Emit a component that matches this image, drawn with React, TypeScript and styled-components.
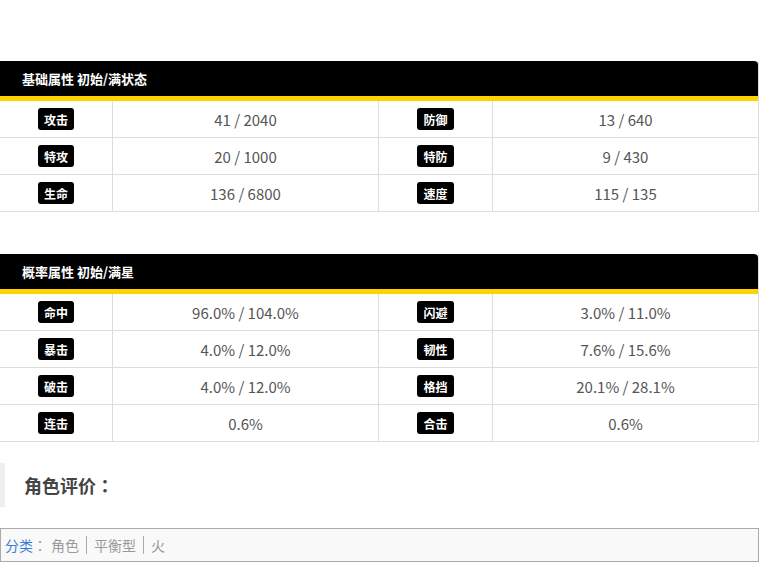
import React from "react";
import styled, { createGlobalStyle } from "styled-components";

const Global = createGlobalStyle`
  html, body { margin: 0; padding: 0; background: #fff; }
  body { font-family: "Noto Sans CJK SC", "Noto Sans", sans-serif; }
`;

const Page = styled.div`
  width: 759px;
  padding-top: 61px;
  display: flex;
  flex-direction: column;
`;

const Table = styled.div<{ $gap: number }>`
  margin-bottom: ${(p) => p.$gap}px;
  border-right: 1px solid #ddd;
`;

const Header = styled.div`
  height: 35px;
  background: #000;
  border-bottom: 5px solid #ffd200;
  border-top-right-radius: 4px;
  display: flex;
  align-items: center;
  padding-left: 22px;
  color: #fff;
  font-size: 13px;
  font-weight: 700;
`;

const Row = styled.div`
  display: grid;
  grid-template-columns: 113px 266px 114px 1fr;
  height: 37px;
  border-bottom: 1px solid #ddd;
  box-sizing: border-box;
`;

const Cell = styled.div<{ $last?: boolean }>`
  display: flex;
  align-items: center;
  justify-content: center;
  border-right: ${(p) => (p.$last ? "none" : "1px solid #ddd")};
  font-size: 15px;
  color: #555;
`;

const Badge = styled.span`
  display: inline-flex;
  align-items: center;
  justify-content: center;
  height: 22px;
  padding: 0 6px;
  background: #000;
  color: #fff;
  border-radius: 3px;
  font-size: 12px;
  font-weight: 700;
`;

const Colon = styled.span`
  font-family: "Noto Sans CJK TC", "Noto Sans CJK SC", sans-serif;
`;

const Heading = styled.div`
  height: 44px;
  border-left: 5px solid #eee;
  display: flex;
  align-items: center;
  padding-left: 19px;
  font-size: 18px;
  font-weight: 700;
  color: #444;
  margin-bottom: 21px;
`;

const Category = styled.div`
  height: 34px;
  box-sizing: border-box;
  border: 1px solid #aaa;
  background: #f9f9f9;
  display: flex;
  align-items: center;
  padding-left: 4px;
  font-size: 14px;
  color: #999;
`;

const CatLink = styled.span`
  color: #3a7bd5;
`;

const CatItem = styled.span<{ $first?: boolean }>`
  padding: 0 7px;
  border-left: ${(p) => (p.$first ? "none" : "1px solid #aaa")};
  padding-left: ${(p) => (p.$first ? "4px" : "7px")};
  line-height: 18px;
`;

type Stat = [string, string, string, string];

const base: Stat[] = [
  ["攻击", "41 / 2040", "防御", "13 / 640"],
  ["特攻", "20 / 1000", "特防", "9 / 430"],
  ["生命", "136 / 6800", "速度", "115 / 135"],
];

const rate: Stat[] = [
  ["命中", "96.0% / 104.0%", "闪避", "3.0% / 11.0%"],
  ["暴击", "4.0% / 12.0%", "韧性", "7.6% / 15.6%"],
  ["破击", "4.0% / 12.0%", "格挡", "20.1% / 28.1%"],
  ["连击", "0.6%", "合击", "0.6%"],
];

function StatTable({ title, rows, gap }: { title: string; rows: Stat[]; gap: number }) {
  return (
    <Table $gap={gap}>
      <Header>{title}</Header>
      {rows.map((r) => (
        <Row key={r[0]}>
          <Cell><Badge>{r[0]}</Badge></Cell>
          <Cell>{r[1]}</Cell>
          <Cell><Badge>{r[2]}</Badge></Cell>
          <Cell $last>{r[3]}</Cell>
        </Row>
      ))}
    </Table>
  );
}

export default function App() {
  return (
    <>
      <Global />
      <Page>
        <StatTable title="基础属性 初始/满状态" rows={base} gap={42} />
        <StatTable title="概率属性 初始/满星" rows={rate} gap={21} />
        <Heading>角色评价<Colon>：</Colon></Heading>
        <Category>
          <CatLink>分类</CatLink><Colon>：</Colon>
          <CatItem $first>角色</CatItem>
          <CatItem>平衡型</CatItem>
          <CatItem>火</CatItem>
        </Category>
      </Page>
    </>
  );
}
